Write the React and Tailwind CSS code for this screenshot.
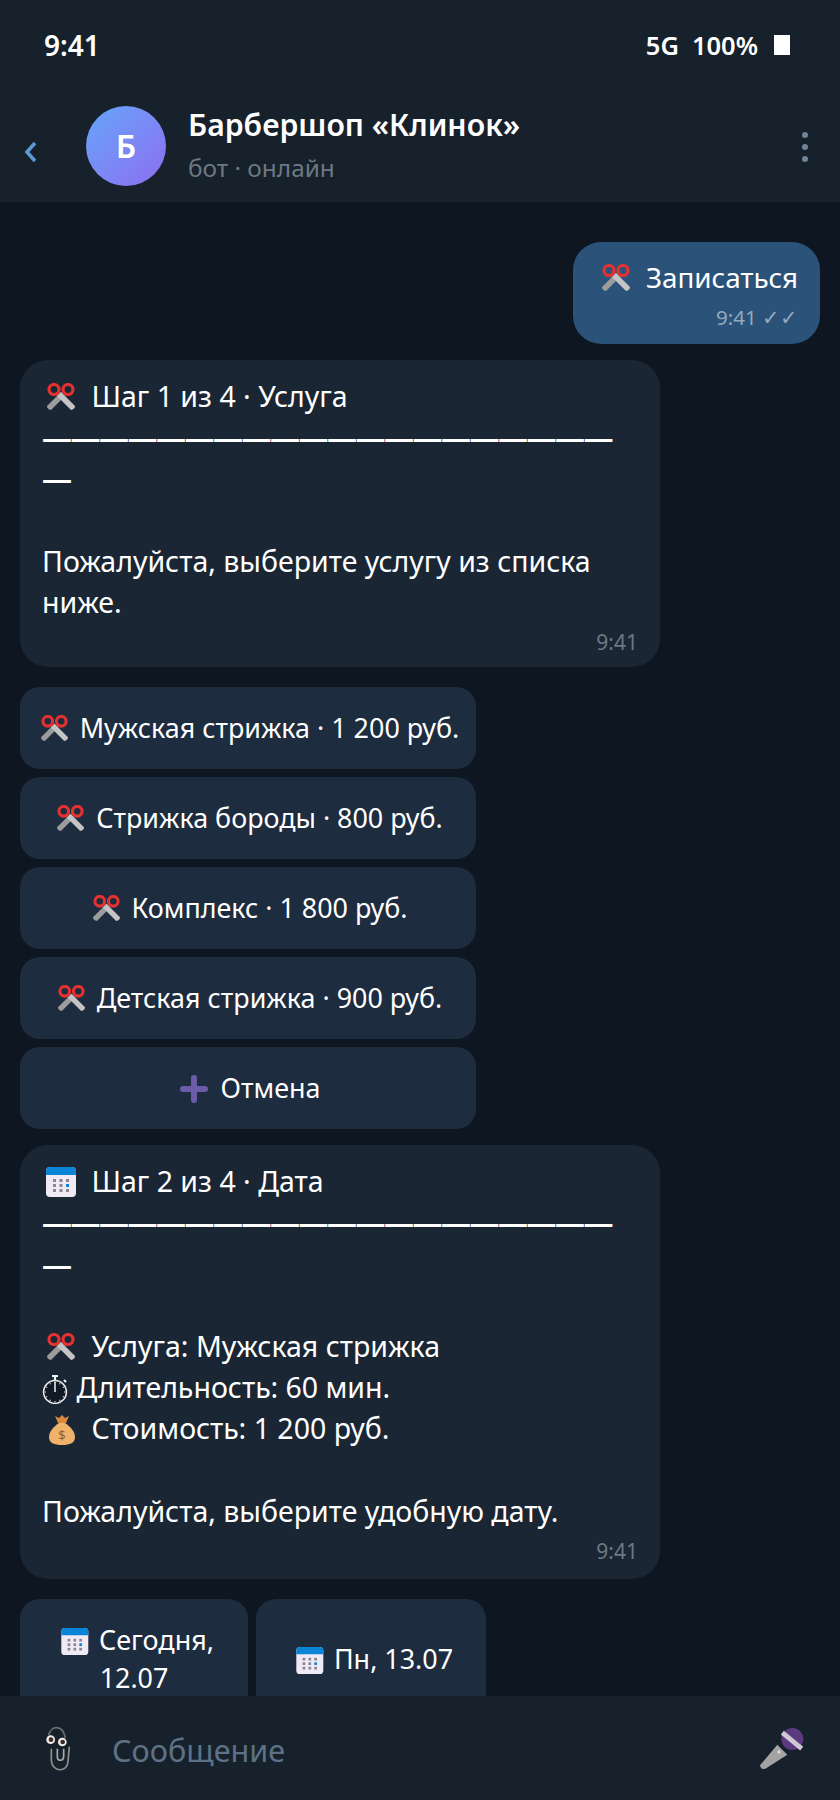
import React from "react";

const FONT = "font-['Noto_Sans','Open_Sans',sans-serif]";

/* ================= EMOJI DRAWINGS ================= */
function Scissors({ viewBox = "-4 0 42 28", className = "w-[42px] h-[28px]" }) {
  return (
    <svg viewBox={viewBox} className={`inline-block align-[-4px] ${className}`}>
      <path d="M15 9 L19 13 L5 27 Q1 26 1 23 Z" fill="#9c9c9c" />
      <path d="M15 9 L11 13 L25 27 Q29 26 29 23 Z" fill="#c4c4c4" />
      <circle cx="8" cy="6.5" r="5" fill="none" stroke="#e5312f" strokeWidth="3.2" />
      <circle cx="22" cy="6.5" r="5" fill="none" stroke="#e5312f" strokeWidth="3.2" />
    </svg>
  );
}

function Calendar({ viewBox = "-2 0 42 30", className = "w-[42px] h-[30px]" }) {
  const dots = [];
  for (let r = 0; r < 3; r++) {
    for (let c = 0; c < 3; c++) {
      dots.push(
        <rect
          key={`${r}-${c}`}
          x={9 + c * 6.5}
          y={12 + r * 5}
          width="3"
          height="3"
          fill={r === 1 && c === 2 ? "#0a84d6" : "#8a8494"}
        />
      );
    }
  }
  return (
    <svg viewBox={viewBox} className={`inline-block align-[-5px] ${className}`}>
      <rect x="2" y="0" width="30" height="30" rx="4" fill="#efeaf4" />
      <path d="M2 8 V4 a4 4 0 0 1 4 -4 H28 a4 4 0 0 1 4 4 V8 Z" fill="#0a84d6" />
      {dots}
    </svg>
  );
}

function Stopwatch() {
  const ticks = [];
  for (let i = 0; i < 12; i++) {
    const a = (i * Math.PI) / 6;
    ticks.push(
      <line
        key={i}
        x1={13 + Math.sin(a) * 9}
        y1={18 - Math.cos(a) * 9}
        x2={13 + Math.sin(a) * 10.2}
        y2={18 - Math.cos(a) * 10.2}
        stroke="#f2f2f2"
        strokeWidth="1.1"
      />
    );
  }
  return (
    <svg viewBox="0 0 27 30" className="inline-block align-[-6px] w-[27px] h-[30px]">
      <circle cx="13" cy="18" r="11.4" fill="#101a24" stroke="#f2f2f2" strokeWidth="1.5" />
      <path d="M10 2 H16 M13 2 V6 M22 6 L24 8" stroke="#f2f2f2" strokeWidth="2.2" fill="none" />
      <path d="M13 8 V18" stroke="#f2f2f2" strokeWidth="1.5" />
      {ticks}
    </svg>
  );
}

function MoneyBag() {
  return (
    <svg viewBox="-3 0 42 30" className="inline-block align-[-6px] w-[42px] h-[30px]">
      <path d="M10 1 L14 3 L17 0 L20 3 L24 1 L21 8 H13 Z" fill="#d98a3a" />
      <path d="M14 8 H20 C26 12 30 17 30 22 C30 28 25 30 17 30 C9 30 4 28 4 22 C4 17 8 12 14 8 Z" fill="#efb26a" />
      <text x="17" y="25" textAnchor="middle" fontSize="13" fill="#9a5a26">$</text>
    </svg>
  );
}

function Plus() {
  return (
    <svg viewBox="-4 0 38 28" className="inline-block align-[-5px] w-[38px] h-[28px]">
      <path d="M14 3 V25 M3 14 H25" stroke="#6b5ba8" strokeWidth="6" strokeLinecap="round" />
    </svg>
  );
}

function Clippy() {
  return (
    <svg viewBox="0 0 180 180" className="w-[60px] h-[60px]">
      <path d="M56 52 C62 22 98 18 106 60" fill="none" stroke="#6d6d6d" strokeWidth="5" />
      <path d="M82 92 V118 C84 130 100 130 101 116 V92" fill="none" stroke="#a9a9a9" strokeWidth="5" />
      <path d="M64 92 V128 C66 162 112 166 114 130 L118 86" fill="none" stroke="#8f8f8f" strokeWidth="5" />
      <circle cx="62" cy="65" r="13" fill="#f1ece6" />
      <circle cx="63" cy="65" r="7" fill="#3a2a2a" />
      <circle cx="97" cy="72" r="13" fill="#f1ece6" />
      <circle cx="98" cy="72" r="7" fill="#3a2a2a" />
    </svg>
  );
}

function Mic() {
  return (
    <svg viewBox="0 0 180 180" className="w-[60px] h-[60px]">
      <path d="M82 80 L112 110 L46 152 Q32 156 30 142 Z" fill="#a3a3a3" />
      <circle cx="87" cy="102" r="5" fill="#d9d9d9" />
      <circle cx="127" cy="63" r="33" fill="#5c3a80" />
      <path d="M97 44 L155 92" stroke="#cfc9d6" strokeWidth="14" />
    </svg>
  );
}

/* ================= BUBBLES ================= */
const DASHES = "—".repeat(21);

function Dashes() {
  return <div className="break-words font-semibold text-[30px] tracking-[-1.5px]">{DASHES}</div>;
}

function BotBubble({ className = "pb-[11px]", children }) {
  return (
    <div className={`w-[640px] bg-[#1a2634] rounded-[28px] pt-[16px] px-[22px] text-[28.5px] leading-[41.2px] text-white ${className}`}>
      {children}
      <div className="text-[21px] leading-[28px] text-[#6c7883] text-right mt-[5px]">9:41</div>
    </div>
  );
}

function KeyButton({ className = "w-[456px]", children }) {
  return (
    <button className={`bg-[#1e2c3f] rounded-[20px] text-[26.9px] leading-[38px] text-white flex items-center justify-center py-[22px] px-[12px] ${className}`}>
      <span className="text-center">{children}</span>
    </button>
  );
}

const services = [
  "Мужская стрижка · 1 200 руб.",
  "Стрижка бороды · 800 руб.",
  "Комплекс · 1 800 руб.",
  "Детская стрижка · 900 руб.",
];

export default function App() {
  return (
    <div className={`w-[840px] h-[1800px] overflow-hidden flex flex-col bg-[#0e1621] ${FONT}`}>
      {/* HEADER */}
      <div className="bg-[#17212b] h-[202px] shrink-0 text-white">
        <div className="h-[90px] flex items-center justify-between pl-[44px] pr-[50px] font-semibold">
          <span className="text-[28px]">9:41</span>
          <div className="flex items-center gap-[13px] text-[25.5px]">
            <span>5G</span>
            <span>100%</span>
            <span className="ml-[3px] w-[16px] h-[20px] bg-white" />
          </div>
        </div>
        <div className="flex items-center pl-[24px] pr-[32px] mt-[16px]">
          <svg viewBox="0 0 14 24" className="w-[14px] h-[24px] mt-[12px]">
            <path d="M11 3 L3 12 L11 21" fill="none" stroke="#5b9bd5" strokeWidth="3.5" />
          </svg>
          <div className="ml-[48px] w-[80px] h-[80px] rounded-full bg-gradient-to-br from-[#60a5fa] to-[#8b6cf0] flex items-center justify-center text-[32px] font-semibold">
            Б
          </div>
          <div className="ml-[22px] flex-1">
            <div className="text-[30.2px] leading-[40px] font-semibold -mt-[2px]">Барбершоп «Клинок»</div>
            <div className="text-[24.4px] leading-[34px] mt-[6px] text-[#6c7883]">бот · онлайн</div>
          </div>
          <div className="flex flex-col gap-[6px] mt-[2px]">
            <span className="w-[6px] h-[6px] rounded-full bg-[#708499]" />
            <span className="w-[6px] h-[6px] rounded-full bg-[#708499]" />
            <span className="w-[6px] h-[6px] rounded-full bg-[#708499]" />
          </div>
        </div>
      </div>

      {/* CHAT */}
      <div className="flex-1 overflow-hidden pt-[40px] px-[20px] flex flex-col items-start">
        <div className="self-end shrink-0 w-[247px] h-[102px] bg-[#2b5278] rounded-[28px] px-[22px] pt-[15px] text-white text-[27.8px] leading-[40px]">
          <div className="text-right whitespace-nowrap">
            <Scissors viewBox="-2 0 40 28" className="w-[40px] h-[28px]" /> Записаться
          </div>
          <div className="text-[20.5px] leading-[26px] mt-[7px] text-[#93a9bc] text-right">9:41 ✓✓</div>
        </div>

        <div className="mt-[16px] shrink-0">
          <BotBubble>
            <div>
              <Scissors /> Шаг 1 из 4 · Услуга
            </div>
            <Dashes />
            <div className="h-[41.2px]" />
            <div>Пожалуйста, выберите услугу из списка ниже.</div>
          </BotBubble>
        </div>

        {/* SERVICES */}
        <div className="mt-[20px] shrink-0 flex flex-col gap-[8px]">
          {services.map((s) => (
            <KeyButton key={s}>
              <Scissors viewBox="-3 0 37 28" className="w-[36px] h-[27px]" /> {s}
            </KeyButton>
          ))}
          <KeyButton>
            <Plus /> Отмена
          </KeyButton>
        </div>

        <div className="mt-[16px] shrink-0">
          <BotBubble className="pb-[14px]">
            <div>
              <Calendar /> Шаг 2 из 4 · Дата
            </div>
            <Dashes />
            <div className="h-[41.2px]" />
            <div>
              <Scissors /> Услуга: Мужская стрижка
            </div>
            <div>
              <Stopwatch /> Длительность: 60 мин.
            </div>
            <div>
              <MoneyBag /> Стоимость: 1 200 руб.
            </div>
            <div className="h-[41.2px]" />
            <div>Пожалуйста, выберите удобную дату.</div>
          </BotBubble>
        </div>

        {/* DATES */}
        <div className="mt-[20px] flex gap-[8px] shrink-0">
          <KeyButton className="w-[228px]">
            <Calendar viewBox="-6 0 42 30" className="w-[38px] h-[27px]" /> Сегодня, 12.07
          </KeyButton>
          <KeyButton className="w-[230px]">
            <Calendar viewBox="-6 0 42 30" className="w-[38px] h-[27px]" /> Пн, 13.07
          </KeyButton>
        </div>
      </div>

      {/* INPUT BAR */}
      <div className="bg-[#17212b] h-[104px] shrink-0 flex items-center pl-[30px] pr-[30px]">
        <Clippy />
        <span className="ml-[22px] flex-1 text-[30.6px] mt-[6px] text-[#5d7286]">Сообщение</span>
        <Mic />
      </div>
    </div>
  );
}
